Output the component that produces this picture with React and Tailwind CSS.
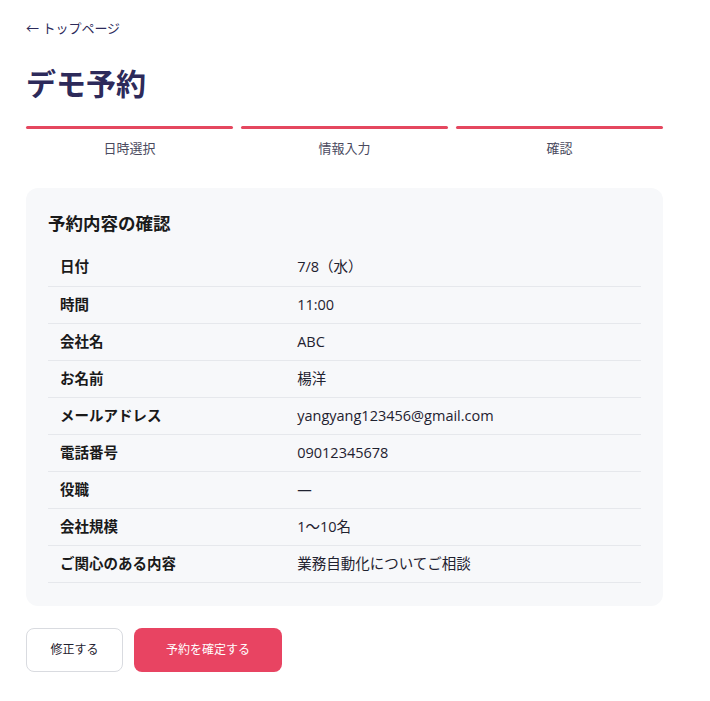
const STEPS = ['日時選択', '情報入力', '確認'];

const ROWS = [
  ['日付', '7/8（水）'],
  ['時間', '11:00'],
  ['会社名', 'ABC'],
  ['お名前', '楊洋'],
  ['メールアドレス', 'yangyang123456@gmail.com'],
  ['電話番号', '09012345678'],
  ['役職', '—'],
  ['会社規模', '1〜10名'],
  ['ご関心のある内容', '業務自動化についてご相談'],
];

export default function App() {
  return (
    <div
      className="min-h-screen bg-white text-[#1f2230]"
      style={{ fontFamily: '"Open Sans", "Noto Sans CJK JP", sans-serif' }}
    >
      <div className="w-[637px] ml-[26px] pt-[18px] pb-10">
        <a href="#" className="block text-[13px] leading-5 text-[#2d2a5a]">
          ← トップページ
        </a>

        <h1 className="mt-[26px] text-[30px] leading-10 font-bold text-[#2d2a5a]">デモ予約</h1>

        {/* step indicator, every step done */}
        <div className="mt-[22px] grid grid-cols-3 gap-2">
          {STEPS.map((s) => (
            <div key={s} className="flex flex-col items-center">
              <div className="h-[3px] w-full rounded-full bg-[#e5475f]" />
              <span className="mt-[9px] text-[13px] leading-5 text-[#4a4a5e]">{s}</span>
            </div>
          ))}
        </div>

        <section className="mt-[30px] rounded-xl bg-[#f7f8fa] px-[22px] pt-[23px] pb-[23px]">
          <h2 className="text-[17.5px] leading-6 font-bold text-[#1a1a1a]">予約内容の確認</h2>
          <table className="mt-[14px] w-full text-[14.5px]">
            <tbody>
              {ROWS.map(([k, v]) => (
                <tr key={k} className="h-[37px] border-b border-[#e6e8ec]">
                  <th className="w-[40%] px-3 text-left font-bold text-[#1a1a1a]">{k}</th>
                  <td className="px-3 text-[#1f2230]">{v}</td>
                </tr>
              ))}
            </tbody>
          </table>
        </section>

        <div className="mt-[22px] flex gap-[11px]">
          <button
            type="button"
            className="h-11 w-[97px] rounded-lg border border-[#d9dbe0] bg-white text-[12px] text-[#1f2230]"
          >
            修正する
          </button>
          <button
            type="button"
            className="h-11 w-[148px] rounded-lg bg-[#e84462] text-[12px] text-white"
          >
            予約を確定する
          </button>
        </div>
      </div>
    </div>
  );
}
